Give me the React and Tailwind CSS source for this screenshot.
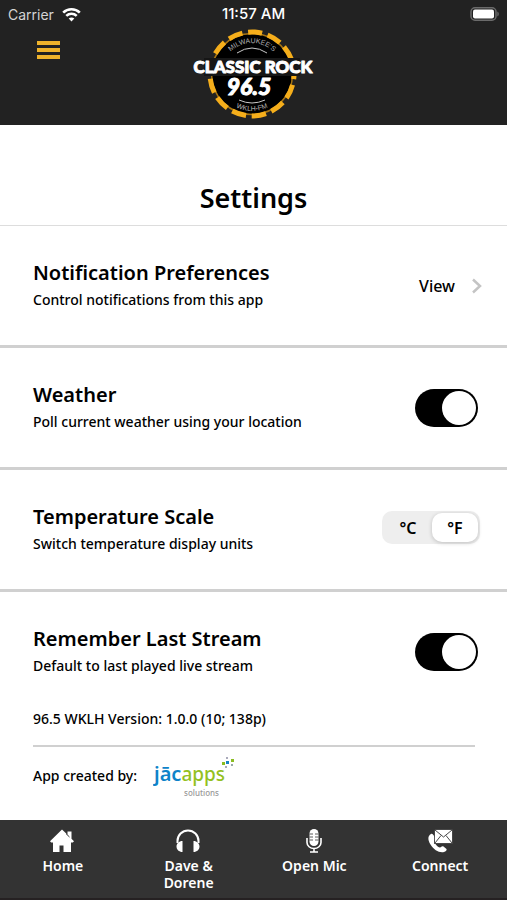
import React, { useState } from "react";

function StatusBar() {
  return (
    <div className="grid grid-cols-3 items-center px-2 h-7 text-white font-['Inter','Roboto',sans-serif]">
      <div className="flex items-center gap-2 text-[14px] text-[#d4d4d4]">
        <span>Carrier</span>
        <svg width="19" height="15" viewBox="0 0 19 15" fill="none" stroke="#fff" strokeWidth="2.6" aria-label="Wi-Fi">
          <path d="M1.2 5.6C5.8 1.1 13.2 1.1 17.8 5.6" />
          <path d="M4.3 8.9C7.2 6.1 11.8 6.1 14.7 8.9" />
          <path d="M9.5 14.4 6.7 11.5C8.2 10 10.8 10 12.3 11.5Z" fill="#fff" stroke="none" />
        </svg>
      </div>
      <div className="text-center text-[15px] font-medium">11:57 AM</div>
      <div className="flex justify-end">
        <svg width="31" height="15" viewBox="0 0 31 15" aria-label="Battery full">
          <rect x="3" y="0.750" width="25" height="12.500" rx="4" fill="none" stroke="#6b6b6b" strokeWidth="1.500" />
          <rect x="5" y="2.500" width="21" height="9" rx="2" fill="#fff" />
          <path d="M29.300 4.500v5c2-1 2-4 0-5Z" fill="#6b6b6b" />
        </svg>
      </div>
    </div>
  );
}

function StationLogo() {
  return (
    <svg width="124" height="92" viewBox="0 0 124 92" role="img" aria-label="Classic Rock 96.5">
      <defs>
        <path id="arcTop" d="M29 46a31 31 0 0 1 62 0" />
        <path id="arcBottom" d="M23 46a37 37 0 0 0 74 0" />
      </defs>
      <circle cx="60" cy="46" r="40.500" fill="#000" stroke="#a87512" strokeWidth="1.500" />
      <circle cx="60" cy="46" r="42" fill="none" stroke="#f5ae1b" strokeWidth="5" strokeDasharray="14.500 5.799" strokeDashoffset="7.250" transform="rotate(-86 60 46)" />
      <path d="M45 25q15-10 30 0M47 72q13 6 26 0" fill="none" stroke="#c8c8c8" strokeWidth="1" />
      <g fill="#b5b5b5" fontFamily="Liberation Sans" fontSize="7" textAnchor="middle">
        <text><textPath href="#arcTop" startOffset="50%">MILWAUKEE’S</textPath></text>
        <text><textPath href="#arcBottom" startOffset="50%">WKLH-FM</textPath></text>
      </g>
      <rect x="12" y="30" width="96" height="18" fill="#161616" />
      <g fill="#fff" stroke="#fff" fontFamily="Lato, sans-serif" fontWeight="900" textAnchor="middle" strokeLinejoin="round">
        <text x="61" y="45" fontSize="17" strokeWidth="1">CLASSIC ROCK</text>
        <text x="57" y="67" fontSize="23" fontStyle="italic" strokeWidth="1">96.5</text>
      </g>
    </svg>
  );
}

function SettingRow({ title, detail, children, last }) {
  return (
    <section
      className={`flex items-center justify-between pl-[33px] h-[122px] border-b-[3px] ${last ? "border-transparent" : "border-[#d0d0d0]"}`}
    >
      <div>
        <h2 className="text-[20px] leading-7 font-semibold">{title}</h2>
        <p className="text-[14px] leading-[26px] font-medium">{detail}</p>
      </div>
      {children}
    </section>
  );
}

function Toggle({ label }) {
  return (
    <input
      type="checkbox"
      role="switch"
      aria-label={label}
      defaultChecked
      className="mr-[29px] flex h-[38px] w-[63px] shrink-0 appearance-none items-center rounded-full bg-[#b5b5b5] p-0.5 before:h-[34px] before:w-[34px] before:rounded-full before:bg-white checked:justify-end checked:bg-black"
    />
  );
}

function ScalePicker() {
  const [scale, setScale] = useState("F");
  return (
    <fieldset className="mr-[27px] mb-1 flex h-[33px] w-[98px] shrink-0 rounded-[10px] bg-[#eeeeee] p-0.5" aria-label="Temperature scale">
      {["C", "F"].map((unit) => (
        <label
          key={unit}
          className="relative flex grow items-center justify-center rounded-[10px] text-[16px] font-semibold has-checked:bg-white has-checked:shadow-[0_1px_4px_rgba(0,0,0,0.2)]"
        >
          <input
            type="radio"
            name="scale"
            className="sr-only"
            checked={scale === unit}
            onChange={() => setScale(unit)}
          />
          °{unit}
        </label>
      ))}
    </fieldset>
  );
}

function JacappsLogo() {
  return (
    <svg width="86" height="44" viewBox="0 0 86 44" role="img" aria-label="jācapps solutions">
      <text x="1" y="25" fontSize="20" fontFamily="Noto Sans, sans-serif">
        <tspan fill="#0e83c9" fontWeight="600">jāc</tspan>
        <tspan fill="#94c11f" fontSize="19">apps</tspan>
      </text>
      <text x="31" y="40" fontSize="8" fill="#999" fontFamily="Noto Sans, sans-serif">solutions</text>
      <rect x="69" y="6" width="3" height="3" fill="#8bbd22" />
      <rect x="73" y="5" width="3" height="3" fill="#1684c5" />
      <rect x="78" y="3" width="3" height="3" fill="#8bbd22" />
      <rect x="73" y="1" width="2" height="2" fill="#aab" />
      <rect x="72" y="10" width="2" height="2" fill="#aab" />
      <rect x="78" y="8" width="2" height="2" fill="#9aa" />
    </svg>
  );
}

const tabs = [
  {
    label: "Home",
    icon: (
      <g fill="#fff">
        <path d="M12 .5 0 12.300l1.200 1.200H3V23h6.500v-6.500h4V23H21v-9.500h1.800L24 12.300l-2.500-2.500V2.500h-4v3.300Z" />
        <path d="m16 4.600 3.500 3.400" stroke="#333" strokeWidth="1" />
      </g>
    ),
  },
  {
    label: "Dave & Dorene",
    icon: (
      <g fill="#fff">
        <path d="M1.500 14v-2a10.500 10.500 0 0 1 21 0v2" fill="none" stroke="#fff" strokeWidth="2" />
        <path d="M6.500 12v11C3 23 .5 20.500.5 17.500S3 12 6.500 12ZM17.500 12v11c3.500 0 6-2.500 6-5.500S21 12 17.500 12Z" />
      </g>
    ),
  },
  {
    label: "Open Mic",
    icon: (
      <g>
        <rect x="7.500" y="0" width="9" height="17" rx="4.500" fill="#fff" />
        <path d="M7.500 5H11M7.500 8H11M7.500 11H11M13 5h3.500M13 8h3.500M13 11h3.500" stroke="#333" strokeWidth="0.800" />
        <path d="M5 9v4.500a7 6 0 0 0 14 0V9M12 19.500V23M8 23h8" fill="none" stroke="#fff" strokeWidth="1.600" />
      </g>
    ),
  },
  {
    label: "Connect",
    icon: (
      <g>
        <path d="M3 5C-.5 7-.3 11 2.500 15.500 6 21 11 24 16 23c2-.5 3-2 2.500-3l-3-2.500c-1.500-.8-2.300.5-3.500 1-2.500-.5-5.500-4-6-6.500.6-1 2-1.500 1.500-3L5 5.500C4.500 4.800 3.700 4.700 3 5Z" fill="#fff" />
        <rect x="6.500" y="0.500" width="18" height="14" fill="#fff" stroke="#333" strokeWidth="0.800" />
        <path d="m7 1 8.500 7L24 1M7 14l6-7.500M24 14l-6-7.500" fill="none" stroke="#333" strokeWidth="0.900" />
      </g>
    ),
  },
];

export default function App() {
  return (
    <div className="flex min-h-screen flex-col bg-white text-black font-['Noto_Sans','Open_Sans',sans-serif]">
      <header className="h-[125px] bg-[#222222]">
        <StatusBar />
        <div className="grid grid-cols-[1fr_auto_1fr] items-start">
          <button type="button" aria-label="Open menu" className="ml-[37px] mt-[13px] flex w-[23px] flex-col gap-[3px]">
            <span className="h-1 bg-[#efb32b]" />
            <span className="h-1 bg-[#efb32b]" />
            <span className="h-1 bg-[#efb32b]" />
          </button>
          <StationLogo />
        </div>
      </header>

      <main className="flex-1">
        <div className="h-[101px] border-b border-[#dddddd] pt-[55px]">
          <h1 className="text-center text-[27px] leading-9 font-semibold">Settings</h1>
        </div>
        <SettingRow title="Notification Preferences" detail="Control notifications from this app">
          <a href="#notifications" className="mr-6 flex items-center gap-4 text-[16px] font-medium">
            View
            <svg width="12" height="16" viewBox="0 0 12 16" fill="none" stroke="#c4c4c4" strokeWidth="2.500" aria-hidden="true">
              <path d="m2 1.500 7 6.500-7 6.500" />
            </svg>
          </a>
        </SettingRow>
        <SettingRow title="Weather" detail="Poll current weather using your location">
          <Toggle label="Weather" />
        </SettingRow>
        <SettingRow title="Temperature Scale" detail="Switch temperature display units">
          <ScalePicker />
        </SettingRow>
        <SettingRow title="Remember Last Stream" detail="Default to last played live stream" last>
          <Toggle label="Remember Last Stream" />
        </SettingRow>
        <div className="ml-[33px] mr-8 text-[14px] font-medium">
          <p className="h-[33px] border-b-2 border-[#d0d0d0] leading-[10px]">96.5 WKLH Version: 1.0.0 (10; 138p)</p>
          <div className="flex items-start gap-4 pt-[9px]">
            <span className="leading-10">App created by:</span>
            <JacappsLogo />
          </div>
        </div>
      </main>

      <nav className="grid h-20 grid-cols-4 border-b-2 border-[#252122] bg-[#333333] pr-1 text-white">
        {tabs.map((tab) => (
          <a key={tab.label} href="#tab" className="flex flex-col items-center pt-[9px] text-[14px] leading-[17px] font-semibold">
            <svg width="25" height="24" viewBox="0 0 25 24" aria-hidden="true">
              {tab.icon}
            </svg>
            <span className="mt-1 max-w-[72px] text-center">{tab.label}</span>
          </a>
        ))}
      </nav>
    </div>
  );
}
